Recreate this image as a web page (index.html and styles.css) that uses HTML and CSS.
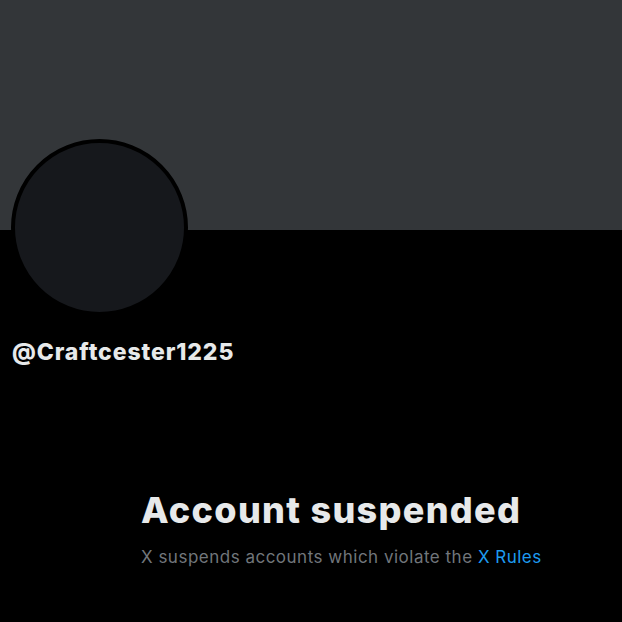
FILE: index.html
```html
<!DOCTYPE html>
<html>
<head>
<meta charset="utf-8">
<link rel="stylesheet" href="styles.css">
</head>
<body>
<div class="banner"></div>
<div class="profile">
  <div class="avatar"></div>
  <div class="handle">@Craftcester1225</div>
</div>
<div class="empty">
  <h1 class="title">Account suspended</h1>
  <p class="sub">X suspends accounts which violate the <a class="link" href="#">X Rules</a></p>
</div>
</body>
</html>
```
FILE: styles.css
```css
html, body {
  margin: 0;
  padding: 0;
  background: #000;
  font-family: "Inter", "Liberation Sans", sans-serif;
  width: 622px;
  height: 622px;
  overflow: hidden;
}
.banner {
  height: 230px;
  background: #333639;
}
.profile {
  padding-left: 11px;
}
.avatar {
  width: 169px;
  height: 169px;
  border: 4px solid #000;
  border-radius: 50%;
  background: #16181c;
  margin-top: -91px;
}
.handle {
  margin-top: 22px;
  padding-left: 1px;
  color: #e7e9ea;
  font-weight: 800;
  font-size: 23px;
  line-height: 28px;
  letter-spacing: 0.9px;
}
.empty {
  padding-left: 141px;
  margin-top: 124px;
}
.title {
  margin: 0;
  color: #e7e9ea;
  font-weight: 800;
  font-size: 36px;
  line-height: 40px;
  letter-spacing: 1.3px;
}
.sub {
  margin: 17px 0 0;
  color: #71767b;
  font-size: 17px;
  line-height: 20px;
  letter-spacing: 0.5px;
}
.link {
  color: #1d9bf0;
  text-decoration: none;
}
```
